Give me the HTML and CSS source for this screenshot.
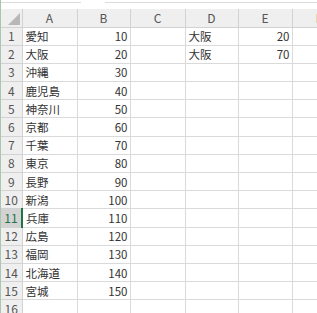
FILE: index.html
```html
<!DOCTYPE html>
<html lang="ja">
<head>
<meta charset="utf-8">
<title>Sheet1</title>
<link rel="stylesheet" href="styles.css">
</head>
<body>
<div class="window">
<div class="fbar"><span class="fb1"></span><span class="fb2"></span></div>
<table class="sheet">
<colgroup><col class="c0"><col class="ca"><col class="cb"><col class="cc"><col class="cd"><col class="ce"><col class="cf"></colgroup>
<tr class="hd"><th class="corner"><span class="tri"></span></th><th>A</th><th>B</th><th>C</th><th>D</th><th>E</th><th>F</th></tr>
<tr><th>1</th><td>愛知</td><td class="n">10</td><td></td><td>大阪</td><td class="n">20</td><td></td></tr>
<tr><th>2</th><td>大阪</td><td class="n">20</td><td></td><td>大阪</td><td class="n">70</td><td></td></tr>
<tr><th>3</th><td>沖縄</td><td class="n">30</td><td></td><td></td><td></td><td></td></tr>
<tr><th>4</th><td>鹿児島</td><td class="n">40</td><td></td><td></td><td></td><td></td></tr>
<tr><th>5</th><td>神奈川</td><td class="n">50</td><td></td><td></td><td></td><td></td></tr>
<tr><th>6</th><td>京都</td><td class="n">60</td><td></td><td></td><td></td><td></td></tr>
<tr><th>7</th><td>千葉</td><td class="n">70</td><td></td><td></td><td></td><td></td></tr>
<tr><th>8</th><td>東京</td><td class="n">80</td><td></td><td></td><td></td><td></td></tr>
<tr><th>9</th><td>長野</td><td class="n">90</td><td></td><td></td><td></td><td></td></tr>
<tr><th>10</th><td>新潟</td><td class="n">100</td><td></td><td></td><td></td><td></td></tr>
<tr><th class="sel">11</th><td>兵庫</td><td class="n">110</td><td></td><td></td><td></td><td></td></tr>
<tr><th>12</th><td>広島</td><td class="n">120</td><td></td><td></td><td></td><td></td></tr>
<tr><th>13</th><td>福岡</td><td class="n">130</td><td></td><td></td><td></td><td></td></tr>
<tr><th>14</th><td>北海道</td><td class="n">140</td><td></td><td></td><td></td><td></td></tr>
<tr><th>15</th><td>宮城</td><td class="n">150</td><td></td><td></td><td></td><td></td></tr>
<tr><th>16</th><td></td><td></td><td></td><td></td><td></td><td></td></tr>
</table>
</div>
</body>
</html>
```
FILE: styles.css
```css
body            {margin:0; background:#fff; overflow:hidden;}
.window         {width:317px; height:313px; border-left:1px solid #a9c6b2; box-sizing:border-box; overflow:hidden;}
.fbar           {height:9px; position:relative;}
.fb1            {position:absolute; left:0; top:2px; width:80px; height:1px; background:#dcdcdc;}
.fb2            {position:absolute; left:104px; top:2px; width:212px; height:1px; background:#dcdcdc;}

.sheet          {border-collapse:collapse; table-layout:fixed; width:345px; font-family:"Noto Sans CJK JP", sans-serif; font-size:11.5px;}
.c0             {width:21px;}
.ca             {width:55px;}
.cb             {width:53px;}
.cc             {width:55px;}
.cd             {width:53px;}
.ce             {width:54px;}
.cf             {width:54px;}

.sheet tr       {height:18.2px;}
.sheet tr.hd    {height:18px;}
.sheet td, .sheet th {padding:0; border:1px solid #dadada; line-height:16px; white-space:nowrap; overflow:hidden;}
.sheet td       {color:#333; padding-left:3px; text-align:left;}
.sheet td.n     {text-align:right; padding-right:2px; padding-left:0;}
.sheet th       {background:#efefef; color:#555; font-weight:normal; text-align:center; border-color:#d2d2d2; font-size:12px;}
.sheet th.sel   {background:#d3d3d3; color:#217346; border-right:2px solid #217346;}
.sheet tr:first-child th, .sheet tr:first-child td {border-top:none;}
.sheet th:first-child {border-left:none;}

.corner         {position:relative;}
.tri            {position:absolute; right:2px; bottom:2px; width:0; height:0; border-left:12px solid transparent; border-bottom:12px solid #b8b8b8;}
```
